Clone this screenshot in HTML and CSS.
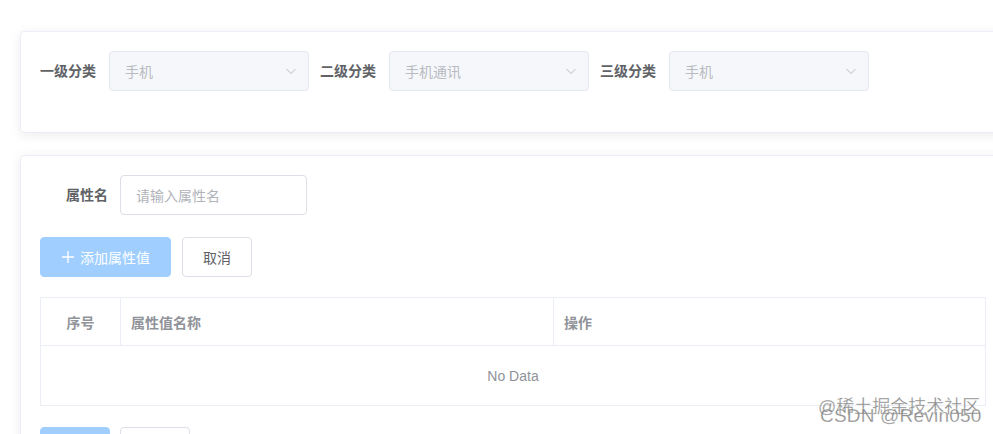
FILE: index.html
```html
<!DOCTYPE html>
<html lang="zh-CN">
<head>
<meta charset="utf-8">
<title>属性管理</title>
<link rel="stylesheet" href="styles.css">
</head>
<body>
<div class="page">
  <section class="card">
    <form class="inline-form">
      <div class="form-item">
        <label class="label">一级分类</label>
        <div class="select is-disabled">
          <span class="select-value">手机</span>
          <svg class="arrow" viewBox="0 0 12 12" width="12" height="12"><path d="M1.5 4 L6 8.5 L10.5 4" fill="none" stroke="currentColor" stroke-width="1"/></svg>
        </div>
      </div>
      <div class="form-item">
        <label class="label">二级分类</label>
        <div class="select is-disabled">
          <span class="select-value">手机通讯</span>
          <svg class="arrow" viewBox="0 0 12 12" width="12" height="12"><path d="M1.5 4 L6 8.5 L10.5 4" fill="none" stroke="currentColor" stroke-width="1"/></svg>
        </div>
      </div>
      <div class="form-item">
        <label class="label">三级分类</label>
        <div class="select is-disabled">
          <span class="select-value">手机</span>
          <svg class="arrow" viewBox="0 0 12 12" width="12" height="12"><path d="M1.5 4 L6 8.5 L10.5 4" fill="none" stroke="currentColor" stroke-width="1"/></svg>
        </div>
      </div>
    </form>
  </section>

  <section class="card card-main">
    <div class="form-row">
      <label class="label label-fixed">属性名</label>
      <div class="input"><span class="placeholder">请输入属性名</span></div>
    </div>
    <div class="btn-row">
      <button class="btn btn-primary is-disabled" type="button">
        <svg class="plus" viewBox="0 0 14 14" width="14" height="14"><path d="M7 1 V13 M1 7 H13" stroke="currentColor" stroke-width="1.3" fill="none"/></svg>
        <span>添加属性值</span>
      </button>
      <button class="btn btn-default" type="button">取消</button>
    </div>
    <div class="table">
      <div class="tr thead">
        <div class="th col-index">序号</div>
        <div class="th col-name">属性值名称</div>
        <div class="th col-op">操作</div>
      </div>
      <div class="empty">No Data</div>
    </div>
    <div class="btn-row btn-row-bottom">
      <button class="btn btn-primary is-disabled btn-small" type="button">保存</button>
      <button class="btn btn-default btn-small" type="button">取消</button>
    </div>
  </section>
</div>
<div class="watermark">
  <span class="wm wm-1">@稀土掘金技术社区</span>
  <span class="wm wm-2">CSDN @Revin050</span>
</div>
</body>
</html>
```

FILE: styles.css
```css
* { box-sizing: border-box; }

html, body {
  margin: 0;
  padding: 0;
  background: #ffffff;
  overflow: hidden;
}

body {
  width: 993px;
  height: 434px;
  font-family: "Liberation Sans", "Noto Sans CJK SC", sans-serif;
  font-size: 14px;
  color: #606266;
  position: relative;
}

.page {
  padding: 31px 0 0 20px;
  display: flex;
  flex-direction: column;
  gap: 22px;
}

.card {
  width: 986px;
  background: #fff;
  border: 1px solid #ebeef5;
  border-radius: 4px;
  box-shadow: 0 2px 12px rgba(0, 0, 0, 0.08);
  padding: 19px;
}

.inline-form {
  display: flex;
  margin: 0 0 22px 0;
}

.form-item {
  display: flex;
  align-items: center;
  margin-right: 11px;
}

.label {
  font-weight: 700;
  color: #606266;
  padding-right: 13px;
  line-height: 40px;
}

.select {
  width: 200px;
  height: 40px;
  border: 1px solid #e4e7ed;
  border-radius: 4px;
  background: #f5f7fa;
  display: flex;
  align-items: center;
  justify-content: space-between;
  padding: 0 11px 0 15px;
}

.select-value {
  color: #b8bbc2;
}

.arrow {
  color: #b8bbc2;
}

.form-row {
  display: flex;
  align-items: center;
  margin-bottom: 22px;
}

.label-fixed {
  width: 80px;
  text-align: right;
  padding-right: 12px;
}

.input {
  width: 187px;
  height: 40px;
  border: 1px solid #dcdfe6;
  border-radius: 4px;
  display: flex;
  align-items: center;
  padding: 0 15px;
}

.placeholder {
  color: #b0b3ba;
}

.btn-row {
  display: flex;
  gap: 11px;
  margin-bottom: 20px;
}

.btn {
  height: 40px;
  padding: 0 20px;
  border-radius: 4px;
  font-family: inherit;
  font-size: 14px;
  display: inline-flex;
  align-items: center;
  justify-content: center;
  gap: 5px;
  cursor: pointer;
}

.btn-primary.is-disabled {
  background: #a0cfff;
  border: 1px solid #a0cfff;
  color: #ffffff;
  width: 131px;
}

.btn-default {
  background: #fff;
  border: 1px solid #dcdfe6;
  color: #606266;
  width: 70px;
}

.plus { flex: none; }

.table {
  width: 946px;
  border: 1px solid #ebeef5;
  margin-bottom: 21px;
}

.tr {
  display: flex;
}

.thead {
  height: 48px;
  border-bottom: 1px solid #ebeef5;
}

.th {
  display: flex;
  align-items: center;
  font-weight: 700;
  color: #909399;
  padding: 0 10px;
}

.col-index {
  width: 80px;
  justify-content: center;
  border-right: 1px solid #ebeef5;
}

.col-name {
  width: 433px;
  border-right: 1px solid #ebeef5;
}

.col-op {
  flex: 1;
}

.empty {
  height: 59px;
  display: flex;
  align-items: center;
  justify-content: center;
  color: #909399;
}

.btn-row-bottom {
  gap: 10px;
}

.btn-primary.btn-small {
  width: 70px;
}

.watermark {
  position: absolute;
  left: 816px;
  top: 396px;
  width: 172px;
  height: 38px;
  pointer-events: none;
}

.wm {
  position: absolute;
  left: 0;
  white-space: nowrap;
  font-size: 18px;
  line-height: 22px;
  color: rgba(110, 110, 110, 0.75);
  -webkit-text-stroke: 0.3px rgba(255, 255, 255, 0.6);
}

.wm-1 {
  top: 0;
  left: 2px;
}

.wm-2 {
  top: 9px;
  left: 4px;
  font-size: 19px;
  letter-spacing: 0.2px;
}
```
